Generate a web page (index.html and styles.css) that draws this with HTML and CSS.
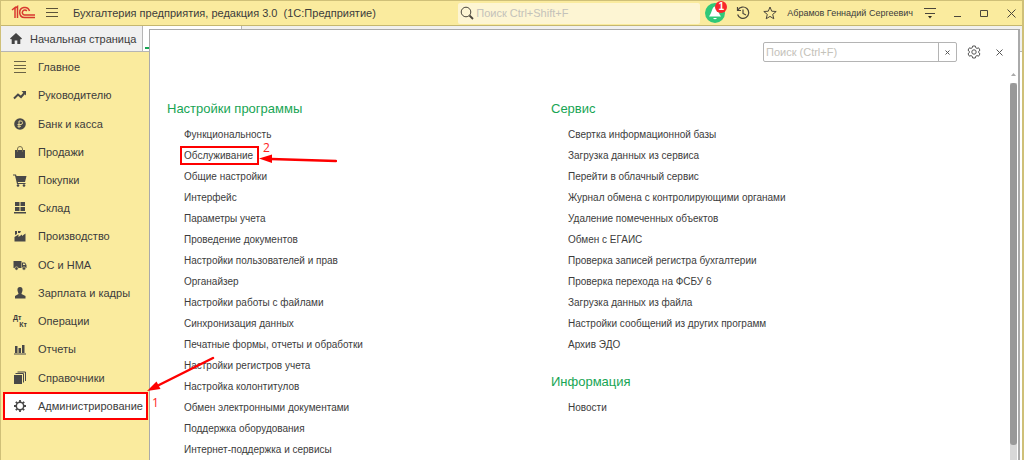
FILE: index.html
```html
<!DOCTYPE html>
<html lang="ru">
<head>
<meta charset="utf-8">
<title>Бухгалтерия предприятия, редакция 3.0</title>
<link rel="stylesheet" href="styles.css">
</head>
<body>
<div class="window">
  <header class="titlebar">
    <svg class="logo" width="26" height="16" viewBox="0 0 26 16" fill="none" stroke="#d8392f">
      <path d="M1 5 4 2.500V13M6.500 13V1.500L3 4" stroke-width="1.500"/>
      <path d="M18.500 6A5 5 0 1 0 13.500 12.500H24" stroke-width="1.500"/>
      <path d="M15.800 6A2.500 2.500 0 1 0 13.500 10H24" stroke-width="1.500"/>
    </svg>
    <button class="icon-btn menu-btn" aria-label="Меню">
      <svg width="12" height="12" viewBox="0 0 12 12" stroke="#5b533a"><path d="M0 1.500H12M0 5.500H12M0 9.500H12"/></svg>
    </button>
    <h1 class="app-title">Бухгалтерия предприятия, редакция 3.0&nbsp; (1С:Предприятие)</h1>
    <label class="global-search">
      <svg width="14" height="14" viewBox="0 0 14 14" fill="none" stroke="#4a463c"><circle cx="6" cy="6" r="4.800"/><path d="m9.500 9.500 3.500 3.500" stroke-width="1.800"/></svg>
      <input type="search" placeholder="Поиск Ctrl+Shift+F" aria-label="Поиск">
    </label>
    <button class="icon-btn bell" aria-label="Уведомления">
      <svg width="20" height="20" viewBox="0 0 20 20"><circle cx="10" cy="10" r="10" fill="#2fc878"/><path d="M10 3.500C7 3.500 7.500 9 4 13.500H16C12.500 9 13 3.500 10 3.500ZM8 15H12Q10 17.500 8 15Z" fill="#fff"/></svg>
      <span class="badge">1</span>
    </button>
    <button class="icon-btn history" aria-label="История">
      <svg width="14" height="14" viewBox="0 0 14 14" fill="none" stroke="#4a463c" stroke-width="1.200"><path d="M2 4A5.700 5.700 0 1 1 1.600 8.500M1.500 1V4.500H5M7 3.500V7.500L10 9"/></svg>
    </button>
    <button class="icon-btn star" aria-label="Избранное">
      <svg width="14" height="14" viewBox="0 0 14 14" fill="none" stroke="#4a463c"><path d="m7 1 1.700 4.200 4.500.3-3.500 2.900 1.100 4.400L7 10.400 3.200 12.800l1.100-4.400L.8 5.500l4.500-.3Z"/></svg>
    </button>
    <span class="user">Абрамов Геннадий Сергеевич</span>
    <button class="icon-btn service" aria-label="Сервис и настройки">
      <svg width="12" height="12" viewBox="0 0 12 12" stroke="#4a463c"><path d="M0 1.500H12M1 6.500H11"/><path d="M4 9H8L6 11.500Z" fill="#2c2a24" stroke="none"/></svg>
    </button>
    <div class="window-controls">
      <button class="icon-btn" aria-label="Свернуть"><svg width="9" height="9" viewBox="0 0 9 9" stroke="#4a463c"><path d="M1 7.500H8"/></svg></button>
      <button class="icon-btn" aria-label="Развернуть"><svg width="9" height="9" viewBox="0 0 9 9" fill="none" stroke="#4a463c"><path d="M.5 1.500H7.500V7.500H.5Z"/></svg></button>
      <button class="icon-btn" aria-label="Закрыть"><svg width="9" height="9" viewBox="0 0 9 9" stroke="#4a463c"><path d="m.5.5 8 8m0-8-8 8"/></svg></button>
    </div>
  </header>

  <div class="workspace">
    <div class="tabs">
      <button class="tab">
        <svg width="12" height="11" viewBox="0 0 12 11" fill="#444"><path d="M6 0 12 5.500 11 6.500 10.300 6V11H7.300V7.500H4.700V11H1.700V6L1 6.500 0 5.500Z"/></svg>
        Начальная страница
      </button>
      <div class="tab-current"></div>
    </div>

    <div class="main">
      <nav class="sidebar">
        <a class="nav-item" href="#"><svg class="nav-icon" viewBox="0 0 14 14" stroke="#6b6345"><path d="M1 1.500H13M1 5.500H13M1 8.500H13M1 12.500H13"/></svg>Главное</a>
        <a class="nav-item" href="#"><svg class="nav-icon" viewBox="0 0 14 14" fill="#484848"><path d="M1 10.500 5 6.500 8 9 11.500 5" fill="none" stroke="#484848" stroke-width="2"/><path d="M8.500 3H13V7.500Z"/></svg>Руководителю</a>
        <a class="nav-item" href="#"><svg class="nav-icon" viewBox="0 0 14 14"><circle cx="7" cy="7" r="5.800" fill="#484848"/><path d="M6 11V4H8Q9.500 4 9.500 5.700T8 7.500H4.500M4.500 9.300H8" fill="none" stroke="#e4d592"/></svg>Банк и касса</a>
        <a class="nav-item" href="#"><svg class="nav-icon" viewBox="0 0 14 14"><path d="M2 5H12V13H2Z" fill="#484848"/><path d="M4.500 7V4Q4.500 1.500 7 1.500T9.500 4V7" fill="none" stroke="#77704f"/></svg>Продажи</a>
        <a class="nav-item" href="#"><svg class="nav-icon" viewBox="0 0 14 14" fill="#484848"><path d="M0 1.500H3L3.500 3H13.500L12 9H4.800L5 10H12.500V11H4L2 2.500H0Z"/><circle cx="5" cy="12.500" r="1.300"/><circle cx="11" cy="12.500" r="1.300"/></svg>Покупки</a>
        <a class="nav-item" href="#"><svg class="nav-icon" viewBox="0 0 14 14" fill="#484848"><path d="M2 1H6.500V5H2ZM7.500 1H12V5H7.500ZM2 6H6.500V10H2ZM7.500 6H12V10H7.500ZM1 11H13V12.500H1Z"/></svg>Склад</a>
        <a class="nav-item" href="#"><svg class="nav-icon" viewBox="0 0 14 14" fill="#484848"><path d="M1.500 12.500V8L5.500 5.500V8L9 5.500V7L12.500 4.500V12.500ZM2 2H4V5L2 6ZM5 2H8L7 4H5Z"/></svg>Производство</a>
        <a class="nav-item" href="#"><svg class="nav-icon" viewBox="0 0 14 14" fill="#484848"><path d="M.5 3H8.500V10H.5ZM9 4.500H12L13.500 7V10H9Z"/><path d="M10 5.500H11.500L12.500 7H10Z" fill="#faeb9e"/><circle cx="3.500" cy="10.500" r="1.700" stroke="#faeb9e" stroke-width=".6"/><circle cx="11" cy="10.500" r="1.700" stroke="#faeb9e" stroke-width=".6"/></svg>ОС и НМА</a>
        <a class="nav-item" href="#"><svg class="nav-icon" viewBox="0 0 14 14" fill="#484848"><path d="M7 1C9 1 9.800 2.200 9.500 4.500 9.300 6 8.500 7 8.500 8L12.500 10V12.500H2V10L5.500 8C5.500 7 4.700 6 4.500 4.500 4.200 2.200 5 1 7 1Z"/></svg>Зарплата и кадры</a>
        <a class="nav-item" href="#"><span class="nav-icon dtkt"><span>Дт</span><span class="kt">Кт</span></span>Операции</a>
        <a class="nav-item" href="#"><svg class="nav-icon" viewBox="0 0 14 14" fill="#484848"><path d="M2 4H4.500V11H2ZM5.500 6H8V11H5.500ZM9 3H11.500V11H9ZM1 11.500H13V12.500H1Z"/></svg>Отчеты</a>
        <a class="nav-item" href="#"><svg class="nav-icon" viewBox="0 0 14 14"><path d="M1 4H9V13H1Z" fill="#484848"/><path d="M2.500 2.500H10.500V11.500M4.500 1H12.500V10" fill="none" stroke="#484848"/></svg>Справочники</a>
        <a class="nav-item nav-item-active" href="#"><svg class="nav-icon" viewBox="0 0 14 14" fill="none" stroke="#484848"><circle cx="7" cy="7" r="3.700" stroke-width="1.500"/><path d="M7 1V3M7 11V13M1 7H3M11 7H13M2.800 2.800 4.200 4.200M9.800 9.800 11.200 11.200M2.800 11.200 4.200 9.800M9.800 4.200 11.200 2.800" stroke-width="1.800"/></svg>Администрирование
          <span class="mark mark-one">1</span>
          <svg class="arrow arrow-one" width="68" height="38" viewBox="0 0 68 38"><path d="M66 2 12 29" stroke="#fe0000" stroke-width="2.500" stroke-linecap="round"/><path d="M0 35 9.500 25.500 13.500 33Z" fill="#fe0000"/></svg>
        </a>
      </nav>
      <div class="backdrop"></div>
    </div>

    <section class="panel">
      <div class="panel-content">
        <div class="panel-tools">
          <div class="panel-search">
            <input type="text" placeholder="Поиск (Ctrl+F)" aria-label="Поиск по разделу">
            <button class="clear" aria-label="Очистить"><svg width="5" height="5" viewBox="0 0 5 5" stroke="#555"><path d="m.5.5 4 4m0-4-4 4"/></svg></button>
          </div>
          <button class="icon-btn" aria-label="Настройка"><svg width="14" height="14" viewBox="0 0 14 14" fill="none" stroke="#555"><path d="M5.700 1H8.300L8.700 2.700 10 3.400 11.600 2.800 13 5.200 11.700 6.300V7.700L13 8.800 11.600 11.200 10 10.600 8.700 11.300 8.300 13H5.700L5.300 11.300 4 10.600 2.400 11.200 1 8.800 2.300 7.700V6.300L1 5.200 2.400 2.800 4 3.400 5.300 2.700Z"/><circle cx="7" cy="7" r="2.200"/></svg></button>
          <button class="icon-btn" aria-label="Закрыть панель"><svg width="7" height="7" viewBox="0 0 7 7" stroke="#555"><path d="m.5.5 6 6m0-6-6 6"/></svg></button>
        </div>
        <div class="columns">
          <div class="column">
            <h2>Настройки программы</h2>
            <ul>
              <li><a href="#">Функциональность</a></li>
              <li><a class="marked" href="#">Обслуживание
                <span class="mark mark-two">2</span>
                <svg class="arrow arrow-two" width="78" height="10" viewBox="0 0 78 10"><path d="M12 5 77 7" stroke="#fe0000" stroke-width="2.500" stroke-linecap="round"/><path d="M0 4.500 13 .5V9Z" fill="#fe0000"/></svg></a></li>
              <li><a href="#">Общие настройки</a></li>
              <li><a href="#">Интерфейс</a></li>
              <li><a href="#">Параметры учета</a></li>
              <li><a href="#">Проведение документов</a></li>
              <li><a href="#">Настройки пользователей и прав</a></li>
              <li><a href="#">Органайзер</a></li>
              <li><a href="#">Настройки работы с файлами</a></li>
              <li><a href="#">Синхронизация данных</a></li>
              <li><a href="#">Печатные формы, отчеты и обработки</a></li>
              <li><a href="#">Настройки регистров учета</a></li>
              <li><a href="#">Настройка колонтитулов</a></li>
              <li><a href="#">Обмен электронными документами</a></li>
              <li><a href="#">Поддержка оборудования</a></li>
              <li><a href="#">Интернет-поддержка и сервисы</a></li>
            </ul>
          </div>
          <div class="column">
            <h2>Сервис</h2>
            <ul>
              <li><a href="#">Свертка информационной базы</a></li>
              <li><a href="#">Загрузка данных из сервиса</a></li>
              <li><a href="#">Перейти в облачный сервис</a></li>
              <li><a href="#">Журнал обмена с контролирующими органами</a></li>
              <li><a href="#">Удаление помеченных объектов</a></li>
              <li><a href="#">Обмен с ЕГАИС</a></li>
              <li><a href="#">Проверка записей регистра бухгалтерии</a></li>
              <li><a href="#">Проверка перехода на ФСБУ 6</a></li>
              <li><a href="#">Загрузка данных из файла</a></li>
              <li><a href="#">Настройки сообщений из других программ</a></li>
              <li><a href="#">Архив ЭДО</a></li>
            </ul>
            <h2>Информация</h2>
            <ul>
              <li><a href="#">Новости</a></li>
            </ul>
          </div>
        </div>
      </div>
      <div class="scrollbar">
        <svg width="5" height="3" viewBox="0 0 5 3" fill="#aaa"><path d="M0 3 2.500 0 5 3Z"/></svg>
        <div class="track"><div class="thumb"></div></div>
      </div>
    </section>
  </div>
</div>
</body>
</html>
```
FILE: styles.css
```css
* { box-sizing: border-box; }

body {
  margin: 0;
  color: #3c3c3c;
  font-family: "Liberation Sans", Arial, sans-serif;
  font-size: 10px;
}

h1, h2, ul { margin: 0; padding: 0; font-weight: 400; }
ul { list-style: none; }
a { color: inherit; text-decoration: none; }
svg { display: block; flex: none; }
button, input { font: inherit; color: inherit; }

.window {
  display: flex;
  flex-direction: column;
  height: 100vh;
  overflow: hidden;
  border: 1px solid #cfc078;
  border-width: 1px 2px 0 1px;
  background: #faeb9e;
}

/* Title bar */
.titlebar {
  display: flex;
  align-items: center;
  height: 25px;
  flex: none;
  padding-right: 6px;
  border-bottom: 1px solid #c5b770;
}

.icon-btn {
  display: flex;
  align-items: center;
  justify-content: center;
  padding: 0;
  border: 0;
  background: none;
}

.logo { margin-left: 10px; }
.menu-btn { margin-left: 9px; }
.app-title { margin-left: 15px; font-size: 11px; white-space: nowrap; }

.global-search {
  display: flex;
  align-items: center;
  gap: 2px;
  width: 242px;
  height: 21px;
  margin-left: auto;
  padding-left: 2px;
  border-radius: 2px;
  background: #fdf5d3;
}

.global-search input {
  flex: 1;
  min-width: 0;
  padding: 0;
  border: 0;
  outline: 0;
  background: none;
  font-size: 11px;
}

input::placeholder { color: #c4c2ba; opacity: 1; }

.bell { position: relative; margin-left: 5px; }

.badge {
  position: absolute;
  top: -2px;
  right: -2px;
  width: 12px;
  height: 12px;
  border-radius: 6px;
  background: #f9252c;
  color: #fff;
  font-weight: 700;
  line-height: 12px;
  text-align: center;
}

.history { margin-left: 11px; }
.star { margin-left: 13px; }
.user { margin-left: 10px; font-size: 9px; white-space: nowrap; }
.service { margin-left: 11px; }
.window-controls { display: flex; gap: 18px; margin-left: 17px; }

/* Tabs */
.workspace {
  position: relative;
  display: flex;
  flex: 1;
  flex-direction: column;
  min-height: 0;
}

.tabs {
  display: flex;
  height: 26px;
  flex: none;
  border-bottom: 1px solid #b5b5b5;
  background: #f0f0f0;
}

.tab {
  display: flex;
  align-items: center;
  gap: 8px;
  width: 142px;
  padding: 0 0 0 9px;
  border: 0;
  border-right: 1px solid #b5b5b5;
  background: #f0f0f0;
  font-size: 11px;
  white-space: nowrap;
}

.tab-current {
  width: 99px;
  border-right: 1px solid #b5b5b5;
  border-left: 2px solid #fff;
  background: linear-gradient(#fff 21px, #17a554 21px, #17a554 23px, #fff 23px);
}

/* Section navigation */
.main { display: flex; flex: 1; min-height: 0; }

.sidebar {
  display: grid;
  flex: none;
  grid-auto-rows: 1fr;
  width: 148px;
  height: 368px;
  padding-top: 1px;
  font-size: 11px;
}

.nav-item {
  position: relative;
  display: flex;
  align-items: center;
  gap: 11px;
  padding-left: 12px;
  white-space: nowrap;
}

.nav-icon { width: 14px; height: 14px; flex: none; }

.nav-item-active {
  z-index: 1;
  margin: 0 1px 0 2px;
  padding-left: 8px;
  border: 2px solid #fe0000;
  background: #fff;
}

.dtkt {
  display: flex;
  flex-direction: column;
  font-size: 7px;
  font-weight: 700;
  line-height: 7px;
}

.kt { align-self: flex-end; }

.backdrop { flex: 1; background: #fff; }

/* Function panel */
.panel {
  position: absolute;
  inset: 3px 2px 0 148px;
  display: flex;
  overflow: hidden;
  border: 1px solid #aaa;
  border-width: 1px 2px 0 1px;
  background: #fff;
}

.panel-content { flex: 1; padding: 12px 0 0 17px; }

.panel-tools {
  display: flex;
  align-items: center;
  justify-content: flex-end;
  gap: 10px;
  padding-right: 6px;
}

.panel-tools .icon-btn:last-child { margin-left: 5px; }

.panel-search {
  display: flex;
  width: 194px;
  height: 20px;
  border: 1px solid #b4b4b4;
  border-radius: 2px;
}

.panel-search input {
  flex: 1;
  min-width: 0;
  padding: 0 2px;
  border: 0;
  outline: 0;
  background: none;
  font-size: 11px;
}

.clear {
  display: flex;
  align-items: center;
  justify-content: center;
  width: 18px;
  padding: 0;
  border: 0;
  border-left: 1px solid #b4b4b4;
  background: none;
}

.columns {
  display: grid;
  grid-template-columns: 384px 1fr;
  padding-top: 38px;
}

.column h2 {
  color: #17a554;
  font-size: 13px;
  line-height: 18px;
}

.column ul { padding: 6px 0 18px 17px; }
.column li { line-height: 21px; white-space: nowrap; }
.marked { position: relative; }

.marked::before {
  content: "";
  position: absolute;
  inset: -4px -6px -4px -4px;
  border: 2px solid #fe0000;
}

.scrollbar {
  display: flex;
  flex-direction: column;
  align-items: center;
  gap: 7px;
  width: 9px;
  padding-top: 43px;
}

.track {
  flex: 1;
  width: 7px;
  background: #d8d8d8;
}

.thumb {
  height: 96%;
  border-radius: 3px;
  background: #999;
}

/* Step marks */
.mark {
  position: absolute;
  color: #fe2222;
  font-family: "Open Sans", sans-serif;
  font-size: 12px;
  line-height: 12px;
}

.arrow { position: absolute; }

.mark-one { left: 147px; top: 3px; }
.mark-two { left: 79px; top: -8px; }
.arrow-one { left: 142px; bottom: 24px; }
.arrow-two { left: 75px; top: 4px; }
```
